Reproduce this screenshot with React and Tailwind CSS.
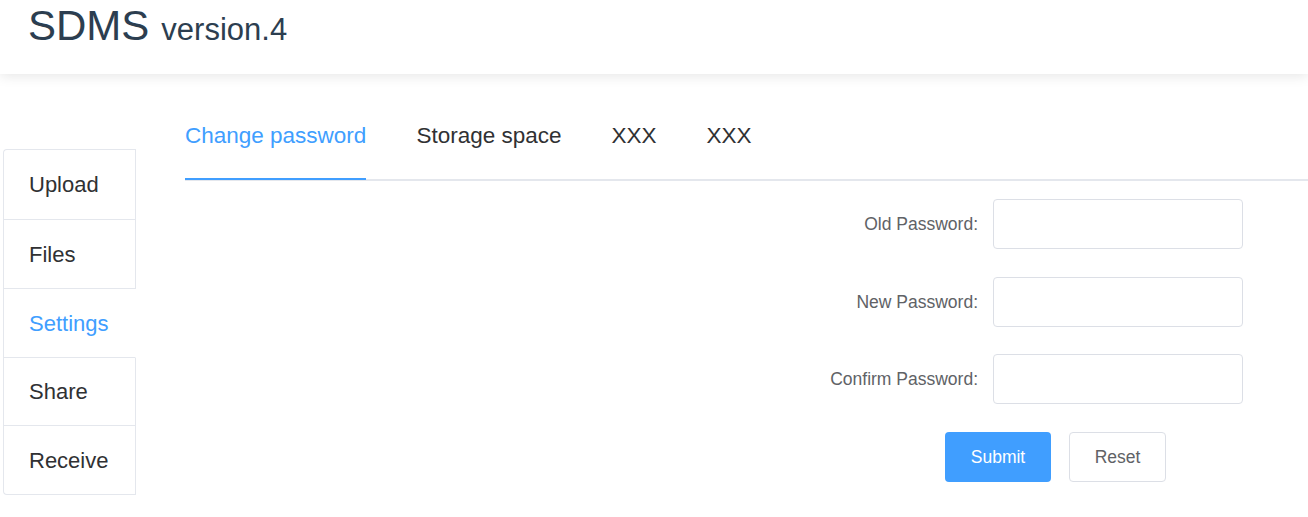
import React, { useState } from 'react';

const menuItems = [
  { label: 'Upload', h: 'h-[70px]' },
  { label: 'Files', h: 'h-[69px]' },
  { label: 'Settings', h: 'h-[69px]' },
  { label: 'Share', h: 'h-[68px]' },
  { label: 'Receive', h: 'h-[68px]' },
];
const tabs = ['Change password', 'Storage space', 'XXX', 'XXX'];
const fields = [
  { label: 'Old Password:', mt: '' },
  { label: 'New Password:', mt: 'mt-[28px]' },
  { label: 'Confirm Password:', mt: 'mt-[27px]' },
];

export default function App() {
  const [activeMenu, setActiveMenu] = useState(2);
  const [activeTab, setActiveTab] = useState(0);

  return (
    <div className="min-h-screen bg-white font-['Liberation_Sans',Arial,sans-serif]">
      {/* Header */}
      <header className="relative z-10 h-[74px] bg-white shadow-[0_2px_12px_0_rgba(0,0,0,0.1)]">
        <div className="flex items-baseline pl-[28px] pt-[2px] text-[#2c3e50]">
          <span className="text-[42px] leading-[48px]">SDMS</span>
          <span className="ml-[12px] text-[31px]">version.4</span>
        </div>
      </header>

      <div className="flex pt-[19px]">
        {/* Side menu */}
        <div className="ml-[3px] mt-[56px] w-[133px] shrink-0">
          <ul className="rounded-l-[4px] border-y border-l border-[#e4e7ed]">
            {menuItems.map((item, i) => (
              <li
                key={item.label}
                onClick={() => setActiveMenu(i)}
                className={`flex ${item.h} cursor-pointer items-center pl-[25px] text-[22px] ${
                  i < menuItems.length - 1 ? 'border-b border-[#e4e7ed]' : ''
                } ${
                  i === activeMenu
                    ? 'border-r border-r-transparent text-[#409eff]'
                    : 'border-r border-r-[#e4e7ed] text-[#303133]'
                }`}
              >
                {item.label}
              </li>
            ))}
          </ul>
        </div>

        {/* Main */}
        <div className="ml-[49px] flex-1">
          <div className="flex border-b-2 border-[#e4e7ed]">
            {tabs.map((tab, i) => (
              <div
                key={i}
                onClick={() => setActiveTab(i)}
                className={`cursor-pointer ${i === 0 ? 'pr-[25px]' : 'px-[25px]'}`}
              >
                <div
                  className={`relative flex h-[86px] items-center text-[22.5px] ${
                    i === activeTab ? 'text-[#409eff]' : 'text-[#303133]'
                  }`}
                >
                  {tab}
                  {i === activeTab && (
                    <span className="absolute bottom-[-1px] left-0 h-[2px] w-full bg-[#409eff]" />
                  )}
                </div>
              </div>
            ))}
          </div>

          {/* Form */}
          <div className="mt-[18px] flex justify-end pr-[65px]">
            <form className="flex w-[420px] flex-col" onSubmit={e => e.preventDefault()}>
              {fields.map(f => (
                <div key={f.label} className={`flex items-center ${f.mt}`}>
                  <label className="w-[170px] pr-[15px] text-right text-[17.5px] text-[#606266]">{f.label}</label>
                  <input
                    type="password"
                    className="h-[50px] w-[250px] rounded-[4px] border border-[#dcdfe6] bg-white px-[15px] outline-none"
                  />
                </div>
              ))}
              <div className="mt-[28px] flex pl-[122px]">
                <button
                  type="submit"
                  className="h-[50px] w-[106px] rounded-[4px] bg-[#409eff] text-[17.5px] text-white"
                >
                  Submit
                </button>
                <button
                  type="reset"
                  className="ml-[18px] h-[50px] w-[97px] rounded-[4px] border border-[#dcdfe6] bg-white text-[17.5px] text-[#606266]"
                >
                  Reset
                </button>
              </div>
            </form>
          </div>
        </div>
      </div>
    </div>
  );
}
